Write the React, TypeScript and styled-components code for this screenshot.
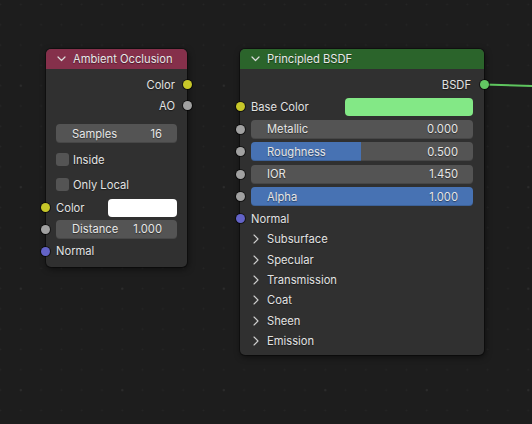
import React from "react";
import styled, { createGlobalStyle } from "styled-components";

const GlobalStyle = createGlobalStyle`
  html, body {
    margin: 0;
    padding: 0;
    background-color: #1d1d1d;
  }
  body {
    font-family: Inter, "Noto Sans", "DejaVu Sans", sans-serif;
    -webkit-font-smoothing: antialiased;
  }
`;

const Canvas = styled.div`
  position: relative;
  width: 532px;
  height: 424px;
  overflow: hidden;
  background-color: #1d1d1d;
  background-image:
    radial-gradient(circle, #2c2c2c 0.9px, transparent 1.4px),
    radial-gradient(circle, #252525 0.7px, transparent 1.1px);
  background-size: 101.5px 101.5px, 20.3px 20.3px;
  background-position: -29.95px 34.95px, -9.65px -5.65px;
`;

const Links = styled.svg`
  position: absolute;
  left: 0;
  top: 0;
  pointer-events: none;
`;

const Node = styled.div<{ $x: number; $y: number; $w: number }>`
  position: absolute;
  left: ${(p) => p.$x}px;
  top: ${(p) => p.$y}px;
  width: ${(p) => p.$w}px;
  background: #303030;
  border-radius: 5px;
  box-shadow: 0 0 0 1px rgba(0, 0, 0, 0.35), 1px 2px 6px rgba(0, 0, 0, 0.55);
  color: #e2e2e2;
  font-size: 11.2px;
  text-shadow: 0 1px 1px rgba(0, 0, 0, 0.45);
`;

const Header = styled.div<{ $bg: string }>`
  height: 20px;
  display: flex;
  align-items: center;
  gap: 7px;
  padding-left: 11px;
  background: ${(p) => p.$bg};
  border-radius: 5px 5px 0 0;
  color: #e8e8e8;
  font-size: 11.2px;
`;

const Body = styled.div<{ $pad: number; $bottom: number }>`
  display: flex;
  flex-direction: column;
  padding: 5px ${(p) => p.$pad}px ${(p) => p.$bottom}px;
`;

const Row = styled.div<{ $h: number; $end?: boolean; $mt?: number }>`
  position: relative;
  height: ${(p) => p.$h}px;
  margin-top: ${(p) => p.$mt ?? 0}px;
  display: flex;
  align-items: center;
  justify-content: ${(p) => (p.$end ? "flex-end" : "space-between")};
  gap: 8px;
`;

const OutLabel = styled.span`
  padding-right: 2px;
`;

const Socket = styled.span<{ $c: string; $side: "l" | "r"; $off: number }>`
  position: absolute;
  top: 50%;
  ${(p) => (p.$side === "l" ? "left" : "right")}: ${(p) => p.$off}px;
  width: 9px;
  height: 9px;
  margin-top: -4.5px;
  border-radius: 50%;
  background: ${(p) => p.$c};
  box-shadow: 0 0 0 1px rgba(0, 0, 0, 0.55);
`;

const Field = styled.div<{ $fill: number }>`
  flex: 1;
  height: 19px;
  box-sizing: border-box;
  border-radius: 4px;
  padding: 0 15px 0 16px;
  display: flex;
  align-items: center;
  justify-content: space-between;
  color: #e6e6e6;
  background: linear-gradient(
    to right,
    #4772b3 ${(p) => p.$fill}%,
    #545454 ${(p) => p.$fill}%
  );
  box-shadow: inset 0 -1px 0 rgba(0, 0, 0, 0.15);
`;

const Swatch = styled.div<{ $c: string; $w: number }>`
  width: ${(p) => p.$w}px;
  height: 18px;
  border-radius: 4px;
  background: ${(p) => p.$c};
`;

const CheckRow = styled.div<{ $mt?: number }>`
  height: 25px;
  margin-top: ${(p) => p.$mt ?? 0}px;
  display: flex;
  align-items: center;
  gap: 4px;
`;

const Box = styled.span`
  width: 13px;
  height: 13px;
  border-radius: 3px;
  background: #545454;
`;

const PanelRow = styled.div`
  height: 20.4px;
  display: flex;
  align-items: center;
  gap: 8px;
  padding-left: 2px;
`;

const Chevron = ({ dir }: { dir: "down" | "right" }) =>
  dir === "down" ? (
    <svg width="9" height="6" viewBox="0 0 9 6">
      <path d="M1 1 L4.5 4.5 L8 1" fill="none" stroke="#dcdcdc" strokeWidth="1.2" strokeLinecap="round" strokeLinejoin="round" />
    </svg>
  ) : (
    <svg width="6" height="10" viewBox="0 0 6 10">
      <path d="M1 1 L5 5 L1 9" fill="none" stroke="#d0d0d0" strokeWidth="1.1" strokeLinecap="round" strokeLinejoin="round" />
    </svg>
  );

const YELLOW = "#c7c729";
const GREY = "#a1a1a1";
const PURPLE = "#6363c7";
const GREEN = "#63c763";

const bsdfFields = [
  { label: "Metallic", value: "0.000", fill: 0 },
  { label: "Roughness", value: "0.500", fill: 49.5 },
  { label: "IOR", value: "1.450", fill: 0 },
  { label: "Alpha", value: "1.000", fill: 100 },
];

const panels = ["Subsurface", "Specular", "Transmission", "Coat", "Sheen", "Emission"];

export default function App() {
  return (
    <>
      <GlobalStyle />
      <Canvas>
        <Links width="532" height="424">
          <path d="M484 84.5 L532 86" stroke="#5ec55e" strokeWidth="2" fill="none" />
        </Links>

        <Node $x={46} $y={49} $w={141}>
          <Header $bg="#85304b">
            <Chevron dir="down" />
            <span>Ambient Occlusion</span>
          </Header>
          <Body $pad={10} $bottom={5}>
            <Row $h={21} $end>
              <OutLabel>Color</OutLabel>
              <Socket $c={YELLOW} $side="r" $off={-14.5} />
            </Row>
            <Row $h={21} $end>
              <OutLabel>AO</OutLabel>
              <Socket $c={GREY} $side="r" $off={-14.5} />
            </Row>
            <Row $h={19} $mt={8}>
              <Field $fill={0}>
                <span>Samples</span>
                <span>16</span>
              </Field>
            </Row>
            <CheckRow $mt={4}>
              <Box />
              <span>Inside</span>
            </CheckRow>
            <CheckRow>
              <Box />
              <span>Only Local</span>
            </CheckRow>
            <Row $h={21}>
              <span>Color</span>
              <Socket $c={YELLOW} $side="l" $off={-15.5} />
              <Swatch $c="#ffffff" $w={69} />
            </Row>
            <Row $h={22}>
              <Socket $c={GREY} $side="l" $off={-15.5} />
              <Field $fill={0}>
                <span>Distance</span>
                <span>1.000</span>
              </Field>
            </Row>
            <Row $h={22}>
              <Socket $c={PURPLE} $side="l" $off={-15.5} />
              <span>Normal</span>
            </Row>
          </Body>
        </Node>

        <Node $x={240} $y={49} $w={244}>
          <Header $bg="#2b642b">
            <Chevron dir="down" />
            <span>Principled BSDF</span>
          </Header>
          <Body $pad={11} $bottom={4}>
            <Row $h={21} $end>
              <OutLabel>BSDF</OutLabel>
              <Socket $c={GREEN} $side="r" $off={-15.5} />
            </Row>
            <Row $h={23}>
              <Socket $c={YELLOW} $side="l" $off={-15.5} />
              <span>Base Color</span>
              <Swatch $c="#83e886" $w={128} />
            </Row>
            {bsdfFields.map((f) => (
              <Row $h={22.5} key={f.label}>
                <Socket $c={GREY} $side="l" $off={-15.5} />
                <Field $fill={f.fill}>
                  <span>{f.label}</span>
                  <span>{f.value}</span>
                </Field>
              </Row>
            ))}
            <Row $h={21}>
              <Socket $c={PURPLE} $side="l" $off={-15.5} />
              <span>Normal</span>
            </Row>
            {panels.map((p) => (
              <PanelRow key={p}>
                <Chevron dir="right" />
                <span>{p}</span>
              </PanelRow>
            ))}
          </Body>
        </Node>
      </Canvas>
    </>
  );
}
